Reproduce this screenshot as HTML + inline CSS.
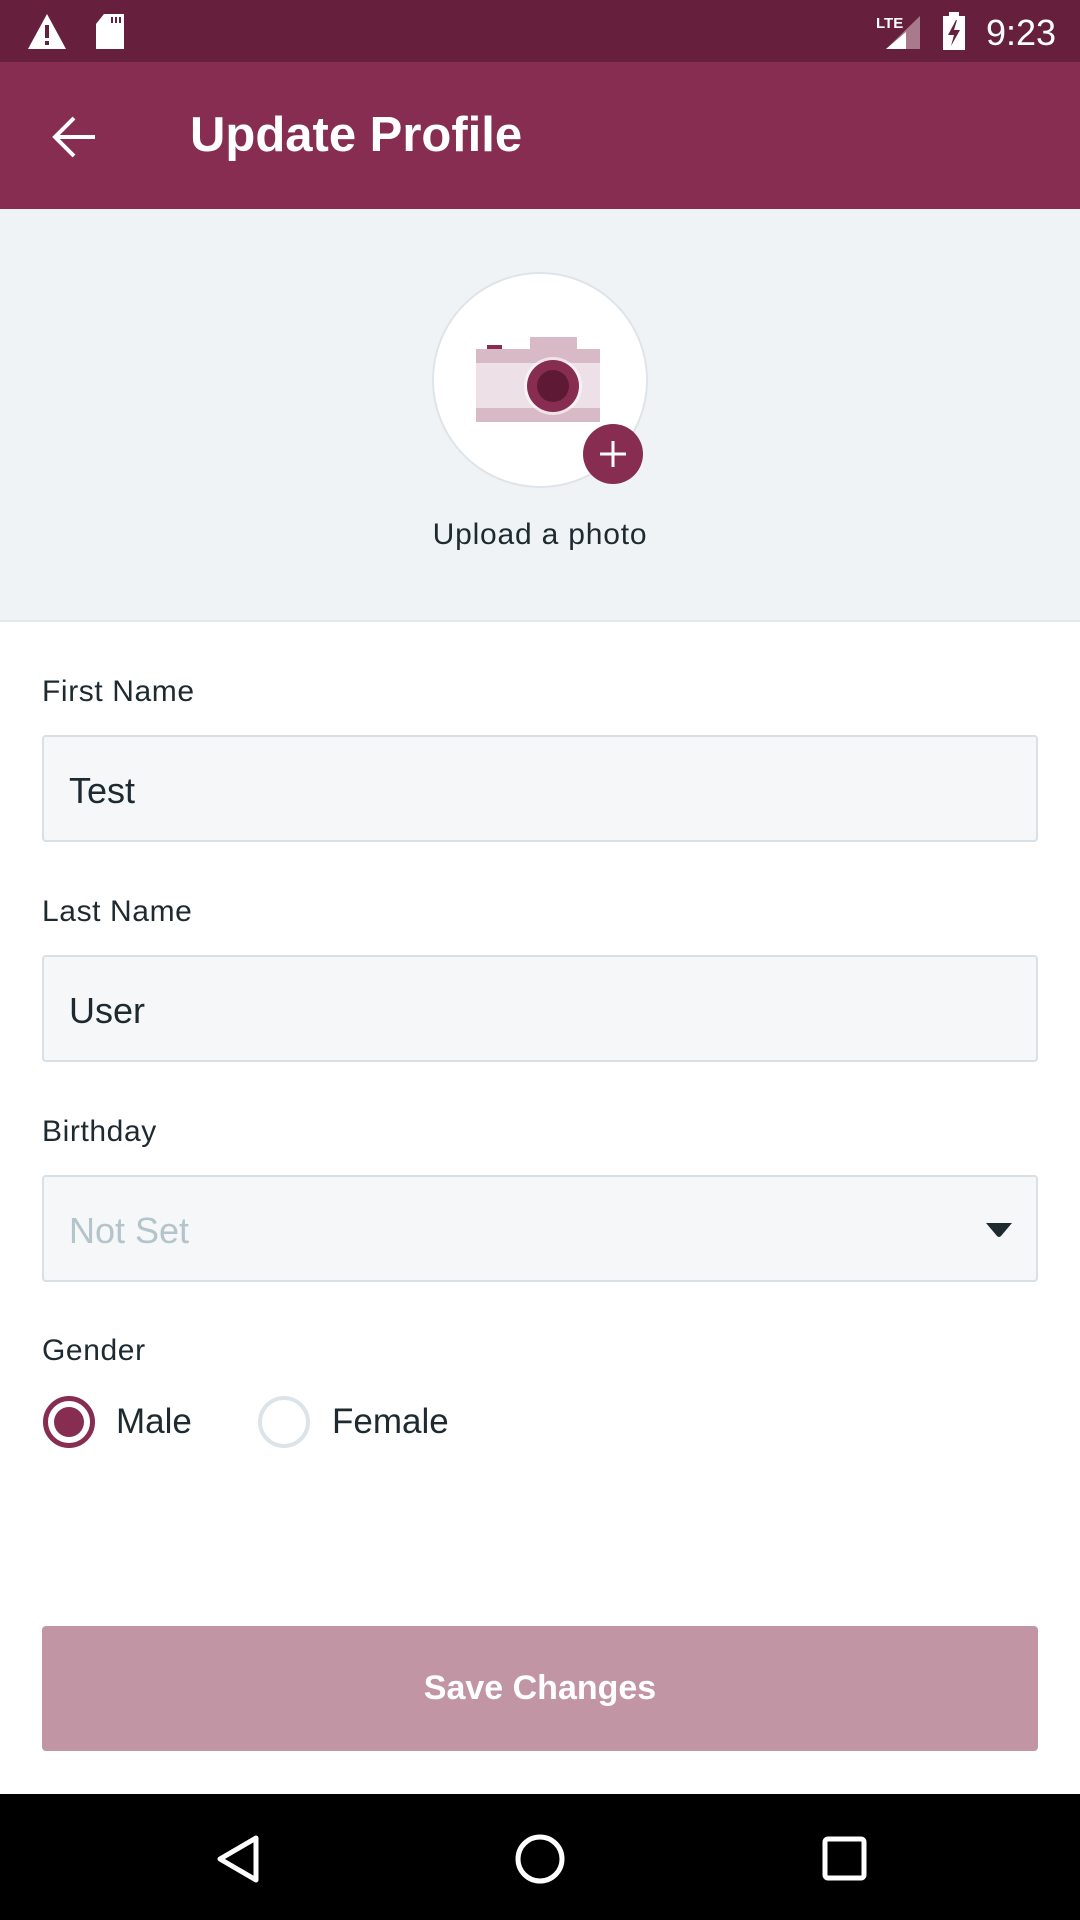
<!DOCTYPE html>
<html><head><meta charset="utf-8"><style>
*{margin:0;padding:0;box-sizing:border-box}
body{width:1080px;height:1920px;position:relative;background:#fff;font-family:"Liberation Sans",sans-serif;overflow:hidden;color:#1e2a30}
.abs{position:absolute}
.lbl{position:absolute;left:42px;font-size:30px;letter-spacing:0.6px;color:#1e2a30}
.inp{position:absolute;left:42px;width:996px;height:107px;background:#f5f7f9;border:2px solid #d8e0e6;border-radius:4px;font-size:36px;padding-left:25px;line-height:107px}
</style></head><body>
<div class="abs" style="left:0;top:0;width:1080px;height:62px;background:#66203e"></div>
<svg class="abs" style="left:0;top:0" width="1080" height="62">
<polygon points="47,14 28,49 66,49" fill="#fff"/><rect x="45" y="25" width="4" height="13" fill="#66203e"/><rect x="45" y="41" width="4" height="4" fill="#66203e"/>
<path d="M104,14 H124 V49 H96 V24 Z" fill="#fff"/><rect x="111" y="17" width="2" height="6" fill="#66203e"/><rect x="115" y="17" width="2" height="6" fill="#66203e"/><rect x="119" y="17" width="2" height="6" fill="#66203e"/>
<text x="876" y="28" font-size="15" font-weight="bold" fill="#fff" font-family="Liberation Sans">LTE</text>
<polygon points="920,16 920,49 886,49" fill="#a87a8c"/><polygon points="906,32 906,49 886,49" fill="#fff"/>
<rect x="943" y="16" width="22" height="34" fill="#fff"/><rect x="949" y="12" width="10" height="5" fill="#fff"/><polygon points="956,20 948,35 954,35 951,46 960,30 954,30 957,20" fill="#66203e"/>
<text x="986" y="45" font-size="36" fill="#fff" font-family="Liberation Sans">9:23</text>
</svg>
<div class="abs" style="left:0;top:62px;width:1080px;height:147px;background:#862d51"></div>
<svg class="abs" style="left:50px;top:114px" width="50" height="46"><path d="M5,23 H45 M24,4 L5,23 L24,42" stroke="#fff" stroke-width="4" fill="none"/></svg>
<div class="abs" style="left:190px;top:107px;font-size:49px;font-weight:bold;color:#fff">Update Profile</div>
<div class="abs" style="left:0;top:209px;width:1080px;height:413px;background:#f0f3f6;border-bottom:2px solid #e3e8ec"></div>
<div class="abs" style="left:432px;top:272px;width:216px;height:216px;border-radius:50%;background:#fff;border:2px solid #dfe4e8"></div>
<svg class="abs" style="left:0;top:0" width="1080" height="520">
<rect x="476" y="349" width="124" height="73" fill="#d8b9c6"/>
<rect x="476" y="363" width="124" height="45" fill="#ede0e6"/>
<rect x="530" y="337" width="47" height="13" fill="#d8b9c6"/>
<rect x="487" y="345" width="15" height="4" fill="#862d51"/>
<circle cx="553" cy="386" r="29" fill="#fff" opacity=".6"/>
<circle cx="553" cy="386" r="26" fill="#862d51"/>
<circle cx="553" cy="386" r="16" fill="#5e1a34"/>
<circle cx="613" cy="454" r="30" fill="#862d51"/>
<path d="M613,441 V467 M600,454 H626" stroke="#fff" stroke-width="3"/>
</svg>
<div class="abs" style="left:0;width:1080px;top:518px;text-align:center;font-size:30px;letter-spacing:0.8px">Upload a photo</div>
<div class="lbl" style="top:675px">First Name</div>
<div class="inp" style="top:735px">Test</div>
<div class="lbl" style="top:895px">Last Name</div>
<div class="inp" style="top:955px">User</div>
<div class="lbl" style="top:1115px">Birthday</div>
<div class="inp" style="top:1175px;color:#b3c4cb">Not Set</div>
<svg class="abs" style="left:985px;top:1221px" width="28" height="20"><path d="M1,2 H27 L16,15 Q14,17 12,15 Z" fill="#1e2a30"/></svg>
<div class="lbl" style="top:1334px">Gender</div>
<div class="abs" style="left:43px;top:1396px;width:52px;height:52px;border-radius:50%;border:5px solid #862d51"></div>
<div class="abs" style="left:54px;top:1407px;width:30px;height:30px;border-radius:50%;background:#862d51"></div>
<div class="abs" style="left:116px;top:1402px;font-size:35px">Male</div>
<div class="abs" style="left:258px;top:1396px;width:52px;height:52px;border-radius:50%;border:4px solid #dce4e9"></div>
<div class="abs" style="left:332px;top:1402px;font-size:35px">Female</div>
<div class="abs" style="left:42px;top:1626px;width:996px;height:125px;background:#c295a5;border-radius:4px;color:#fff;font-size:34px;font-weight:bold;text-align:center;line-height:125px">Save Changes</div>
<div class="abs" style="left:0;top:1794px;width:1080px;height:126px;background:#000"></div>
<svg class="abs" style="left:0;top:1794px" width="1080" height="126">
<polygon points="256,44 256,86 220,65" fill="none" stroke="#fff" stroke-width="5" stroke-linejoin="round"/>
<circle cx="540" cy="65" r="22" fill="none" stroke="#fff" stroke-width="5"/>
<rect x="825" y="45" width="39" height="39" rx="3" fill="none" stroke="#fff" stroke-width="5"/>
</svg>
</body></html>
